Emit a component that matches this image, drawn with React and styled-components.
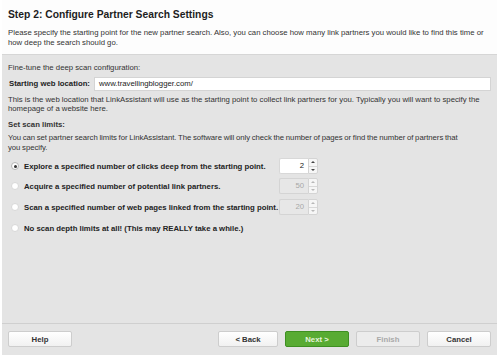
import React from "react";
import styled, { createGlobalStyle } from "styled-components";

const Global = createGlobalStyle`
  html, body { margin: 0; padding: 0; background: #ffffff; }
  body { font-family: "Liberation Sans", Arial, sans-serif; color: #2b2b2b; }
  * { box-sizing: border-box; }
`;

const Frame = styled.div`
  width: 500px;
  height: 359px;
  padding: 0 3px 4px 2px;
  display: flex;
  flex-direction: column;
`;

const Header = styled.div`
  background: #fdfdfd;
  padding: 9px 4px 0 6px;
  height: 55px;
  border-bottom: 1px solid #d6d6d6;
`;

const Title = styled.h1`
  margin: 0 0 8px 0;
  font-size: 10.3px;
  font-weight: bold;
  color: #1e1e1e;
`;

const Desc = styled.p`
  margin: 0;
  font-size: 7.75px;
  line-height: 9.5px;
  color: #333;
`;

const Body = styled.div`
  flex: 1;
  background: #e4e4e4;
  display: flex;
  flex-direction: column;
`;

const Content = styled.div`
  flex: 1;
  padding: 8px 1px 0 6px;
  display: flex;
  flex-direction: column;
`;

const Text = styled.div`
  font-size: 7.75px;
  line-height: 9.5px;
  color: #333;
  margin-bottom: ${(p) => p.$mb || 0}px;
  font-weight: ${(p) => (p.$bold ? "bold" : "normal")};
  letter-spacing: ${(p) => (p.$tight ? "-0.04px" : "normal")};
  word-spacing: ${(p) => (p.$tight ? "-0.4px" : "normal")};
`;

const LocationRow = styled.div`
  display: flex;
  align-items: center;
  gap: 6px;
  margin: 4px 0 4px 0;
`;

const Label = styled.span`
  font-size: 7.75px;
  font-weight: bold;
  color: #222;
  width: 80px;
  padding-left: 1px;
  white-space: nowrap;
`;

const Field = styled.div`
  flex: 1;
  height: 14px;
  background: #fff;
  border: 1px solid #d4d4d4;
  font-size: 7.75px;
  line-height: 12px;
  padding-left: 4px;
  margin-right: 5px;
  color: #222;
`;

const Options = styled.div`
  display: flex;
  flex-direction: column;
  margin-top: 4px;
`;

const OptionRow = styled.div`
  display: flex;
  align-items: center;
  height: ${(p) => p.$h || 20}px;
`;

const Radio = styled.span`
  width: 8px;
  height: 8px;
  border-radius: 50%;
  background: #fff;
  border: 1px solid ${(p) => (p.$checked ? "#b5b5b5" : "#d8d8d8")};
  display: flex;
  align-items: center;
  justify-content: center;
  margin: 0 5px 0 3px;
  flex-shrink: 0;
  &::after {
    content: "";
    width: 3px;
    height: 3px;
    border-radius: 50%;
    background: ${(p) => (p.$checked ? "#333" : "transparent")};
  }
`;

const OptionLabel = styled.span`
  font-size: 7.75px;
  font-weight: bold;
  color: #222;
  width: 245px;
  white-space: nowrap;
`;

const Spinner = styled.div`
  display: flex;
  height: 16px;
  margin-left: 10px;
`;

const SpinValue = styled.div`
  width: 29px;
  height: 16px;
  background: ${(p) => (p.$disabled ? "#e7e7e7" : "#fff")};
  border: 1px solid ${(p) => (p.$disabled ? "#d4d4d4" : "#d8d8d8")};
  border-right: none;
  border-radius: 2px 0 0 2px;
  font-size: 7.75px;
  line-height: 14px;
  text-align: right;
  padding-right: 4px;
  color: ${(p) => (p.$disabled ? "#a8a8a8" : "#222")};
`;

const SpinArrows = styled.div`
  width: 10px;
  display: flex;
  flex-direction: column;
  border: 1px solid #d4d4d4;
  border-radius: 0 2px 2px 0;
  background: #f6f6f6;
`;

const Arrow = styled.div`
  flex: 1;
  display: flex;
  align-items: center;
  justify-content: center;
  & + & { border-top: 1px solid #d8d8d8; }
  &::after {
    content: "";
    border-left: 2px solid transparent;
    border-right: 2px solid transparent;
    ${(p) => (p.$down ? "border-top" : "border-bottom")}: 2px solid ${(p) => (p.$disabled ? "#b8b8b8" : "#444")};
  }
`;

const Footer = styled.div`
  height: 32px;
  border-top: 1px solid #cfcfcf;
  display: flex;
  align-items: center;
  padding: 0 6px 1px 6px;
  gap: 7px;
`;

const Spacer = styled.div`
  flex: 1;
`;

const Button = styled.button`
  width: ${(p) => p.$w || 64}px;
  height: 16px;
  padding: 0;
  font-family: "Liberation Sans", Arial, sans-serif;
  font-size: 7.75px;
  font-weight: bold;
  border-radius: 2px;
  border: 1px solid ${(p) => (p.$primary ? "#3e8f22" : "#cdcdcd")};
  background: ${(p) =>
    p.$primary
      ? "#58ab33"
      : p.$disabled
      ? "#ececec"
      : "linear-gradient(#ffffff, #f1f1f1)"};
  color: ${(p) => (p.$primary ? "#e6f4dc" : p.$disabled ? "#a9a9a9" : "#333")};
`;

const SpinBox = ({ value, disabled }) => (
  <Spinner>
    <SpinValue $disabled={disabled}>{value}</SpinValue>
    <SpinArrows>
      <Arrow $disabled={disabled} />
      <Arrow $down $disabled={disabled} />
    </SpinArrows>
  </Spinner>
);

export default function App() {
  return (
    <>
      <Global />
      <Frame>
        <Header>
          <Title>Step 2: Configure Partner Search Settings</Title>
          <Desc>
            Please specify the starting point for the new partner search. Also, you can choose how many link partners you would like to find this time or how deep the search should go.
          </Desc>
        </Header>
        <Body>
          <Content>
            <Text>Fine-tune the deep scan configuration:</Text>
            <LocationRow>
              <Label>Starting web location:</Label>
              <Field>www.travellingblogger.com/</Field>
            </LocationRow>
            <Text $mb={6}>
              This is the web location that LinkAssistant will use as the starting point to collect link partners for you. Typically you will want to specify the homepage of a website here.
            </Text>
            <Text $bold $mb={4}>Set scan limits:</Text>
            <Text $tight>
              You can set partner search limits for LinkAssistant. The software will only check the number of pages or find the number of partners that
              <br />
              you specify.
            </Text>
            <Options>
              <OptionRow>
                <Radio $checked />
                <OptionLabel>Explore a specified number of clicks deep from the starting point.</OptionLabel>
                <SpinBox value="2" />
              </OptionRow>
              <OptionRow>
                <Radio />
                <OptionLabel>Acquire a specified number of potential link partners.</OptionLabel>
                <SpinBox value="50" disabled />
              </OptionRow>
              <OptionRow $h={22}>
                <Radio />
                <OptionLabel>Scan a specified number of web pages linked from the starting point.</OptionLabel>
                <SpinBox value="20" disabled />
              </OptionRow>
              <OptionRow>
                <Radio />
                <OptionLabel>No scan depth limits at all! (This may REALLY take a while.)</OptionLabel>
              </OptionRow>
            </Options>
          </Content>
          <Footer>
            <Button>Help</Button>
            <Spacer />
            <Button $w={60}>&lt; Back</Button>
            <Button $primary>Next &gt;</Button>
            <Button $disabled>Finish</Button>
            <Button>Cancel</Button>
          </Footer>
        </Body>
      </Frame>
    </>
  );
}
